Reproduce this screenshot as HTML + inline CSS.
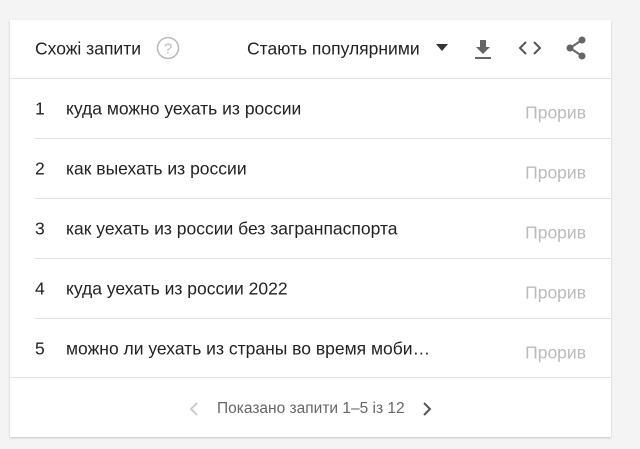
<!DOCTYPE html>
<html><head><meta charset="utf-8"><style>
body{margin:0;background:#f4f4f4;width:640px;height:449px;overflow:hidden;font-family:"Liberation Sans",sans-serif;}
.card{position:absolute;left:10px;top:20px;width:601px;height:417px;background:#fff;box-shadow:0 1px 2px rgba(0,0,0,.2);}
.t{position:absolute;white-space:nowrap;font-size:17.5px;color:#222;transform:translateY(-50%);}
.g{color:#bbb;}
.line{position:absolute;height:1px;background:#e2e2e2;}
</style></head><body>
<div class="card">
<div class="t" style="left:25px;top:29px">Схожі запити</div>
<svg style="position:absolute;left:146px;top:16px" width="24" height="24" viewBox="0 0 24 24"><circle cx="12" cy="12" r="10.5" fill="none" stroke="#bbb" stroke-width="1.6"/><text x="12" y="17.5" text-anchor="middle" font-size="15" fill="#bbb" font-family="Liberation Sans">?</text></svg>
<div class="t" style="left:237px;top:29px">Стають популярними</div>
<svg style="position:absolute;left:426px;top:24px" width="12" height="8"><path d="M0 0H12L6 7Z" fill="#333"/></svg>
<svg style="position:absolute;left:463px;top:18px" width="20" height="22" viewBox="0 0 20 22"><path d="M7 2h6v7h4l-7 7-7-7h4z" fill="#666"/><rect x="2" y="19" width="16" height="2" fill="#666"/></svg>
<svg style="position:absolute;left:508px;top:19px" width="24" height="18" viewBox="0 0 24 18"><path d="M8 3L2 9l6 6M16 3l6 6-6 6" fill="none" stroke="#555" stroke-width="2"/></svg>
<svg style="position:absolute;left:555px;top:16px" width="22" height="24" viewBox="0 0 22 24"><circle cx="17" cy="4" r="3.5" fill="#666"/><circle cx="5" cy="12" r="3.5" fill="#666"/><circle cx="17" cy="20" r="3.5" fill="#666"/><path d="M17 4L5 12l12 8" fill="none" stroke="#666" stroke-width="2"/></svg>
<div class="line" style="left:0;right:0;top:58px"></div>

<div class="t" style="left:25px;top:89px">1</div><div class="t" style="left:56px;top:89px">куда можно уехать из россии</div><div class="t g" style="right:25px;top:93px">Прорив</div>
<div class="line" style="left:25px;right:0;top:118px"></div>
<div class="t" style="left:25px;top:149px">2</div><div class="t" style="left:56px;top:149px">как выехать из россии</div><div class="t g" style="right:25px;top:153px">Прорив</div>
<div class="line" style="left:25px;right:0;top:178px"></div>
<div class="t" style="left:25px;top:209px">3</div><div class="t" style="left:56px;top:209px">как уехать из россии без загранпаспорта</div><div class="t g" style="right:25px;top:213px">Прорив</div>
<div class="line" style="left:25px;right:0;top:238px"></div>
<div class="t" style="left:25px;top:269px">4</div><div class="t" style="left:56px;top:269px">куда уехать из россии 2022</div><div class="t g" style="right:25px;top:273px">Прорив</div>
<div class="line" style="left:25px;right:0;top:298px"></div>
<div class="t" style="left:25px;top:329px">5</div><div class="t" style="left:56px;top:329px">можно ли уехать из страны во время моби…</div><div class="t g" style="right:25px;top:333px">Прорив</div>
<div class="line" style="left:0;right:0;top:357px"></div>

<svg style="position:absolute;left:179px;top:382px" width="10" height="14"><path d="M8 1L2 7l6 6" fill="none" stroke="#ccc" stroke-width="2"/></svg>
<div class="t" style="left:207px;top:389px;font-size:15.5px;color:#666">Показано запити 1–5 із 12</div>
<svg style="position:absolute;left:412px;top:382px" width="10" height="14"><path d="M2 1l6 6-6 6" fill="none" stroke="#555" stroke-width="2"/></svg>
</div>
</body></html>
